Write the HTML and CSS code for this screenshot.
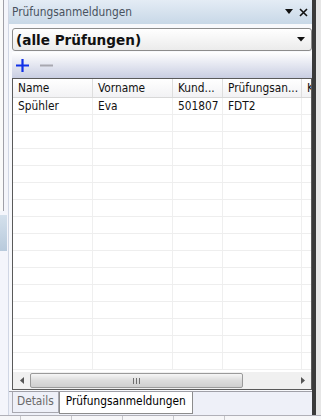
FILE: index.html
```html
<!DOCTYPE html>
<html lang="de">

<head>
  <meta charset="utf-8">
  <title>Prüfungsanmeldungen</title>
  <link rel="stylesheet" href="styles.css">
</head>

<body>
  <div id="screen">
    <div id="leftstrip">
      <div class="leftline"></div>
      <div class="leftblock"></div>
    </div>
    <div id="dock">
      <div id="titlebar">
        <span class="title">Prüfungsanmeldungen</span>
        <span class="titlebtns">
          <svg width="8" height="6" viewBox="0 0 8 6"><path d="M0 0H8L4 5Z" fill="#111"/></svg>
          <svg width="9" height="9" viewBox="0 0 9 9"><path d="M1 1L8 8M8 1L1 8" stroke="#111" stroke-width="1.6"/></svg>
        </span>
      </div>
      <div id="body">
        <div class="combo">
          <span>(alle Prüfungen)</span>
          <svg width="8" height="5" viewBox="0 0 8 5"><path d="M0 0H8L4 4.5Z" fill="#111"/></svg>
        </div>
        <div class="toolbar">
          <svg class="tbicon" width="13" height="13" viewBox="0 0 13 13"><path d="M6.5 0V13M0 6.5H13" stroke="#1030e8" stroke-width="2.2"/></svg>
          <svg class="tbicon" width="13" height="13" viewBox="0 0 13 13"><path d="M0 6.5H13" stroke="#a8a8b0" stroke-width="2"/></svg>
        </div>
        <div class="grid">
          <div class="rows">
            <div class="row head">
              <div class="c c1">Name</div>
              <div class="c c2">Vorname</div>
              <div class="c c3">Kund...</div>
              <div class="c c4">Prüfungsan...</div>
              <div class="c c5">K</div>
            </div>
            <div class="row">
              <div class="c c1">Spühler</div>
              <div class="c c2">Eva</div>
              <div class="c c3">501807</div>
              <div class="c c4">FDT2</div>
              <div class="c c5"></div>
            </div>
            <div class="row"><div class="c c1"></div><div class="c c2"></div><div class="c c3"></div><div class="c c4"></div><div class="c c5"></div></div>
            <div class="row"><div class="c c1"></div><div class="c c2"></div><div class="c c3"></div><div class="c c4"></div><div class="c c5"></div></div>
            <div class="row"><div class="c c1"></div><div class="c c2"></div><div class="c c3"></div><div class="c c4"></div><div class="c c5"></div></div>
            <div class="row"><div class="c c1"></div><div class="c c2"></div><div class="c c3"></div><div class="c c4"></div><div class="c c5"></div></div>
            <div class="row"><div class="c c1"></div><div class="c c2"></div><div class="c c3"></div><div class="c c4"></div><div class="c c5"></div></div>
            <div class="row"><div class="c c1"></div><div class="c c2"></div><div class="c c3"></div><div class="c c4"></div><div class="c c5"></div></div>
            <div class="row"><div class="c c1"></div><div class="c c2"></div><div class="c c3"></div><div class="c c4"></div><div class="c c5"></div></div>
            <div class="row"><div class="c c1"></div><div class="c c2"></div><div class="c c3"></div><div class="c c4"></div><div class="c c5"></div></div>
            <div class="row"><div class="c c1"></div><div class="c c2"></div><div class="c c3"></div><div class="c c4"></div><div class="c c5"></div></div>
            <div class="row"><div class="c c1"></div><div class="c c2"></div><div class="c c3"></div><div class="c c4"></div><div class="c c5"></div></div>
            <div class="row"><div class="c c1"></div><div class="c c2"></div><div class="c c3"></div><div class="c c4"></div><div class="c c5"></div></div>
            <div class="row"><div class="c c1"></div><div class="c c2"></div><div class="c c3"></div><div class="c c4"></div><div class="c c5"></div></div>
            <div class="row"><div class="c c1"></div><div class="c c2"></div><div class="c c3"></div><div class="c c4"></div><div class="c c5"></div></div>
            <div class="row"><div class="c c1"></div><div class="c c2"></div><div class="c c3"></div><div class="c c4"></div><div class="c c5"></div></div>
            <div class="row"><div class="c c1"></div><div class="c c2"></div><div class="c c3"></div><div class="c c4"></div><div class="c c5"></div></div>
          </div>
          <div class="hscroll">
            <div class="arrow">
              <svg width="4" height="7" viewBox="0 0 4 7"><path d="M4 0V7L0 3.5Z" fill="#555"/></svg>
            </div>
            <div class="track">
              <div class="thumb"><span class="grip"></span></div>
            </div>
            <div class="arrow">
              <svg width="4" height="7" viewBox="0 0 4 7"><path d="M0 0V7L4 3.5Z" fill="#555"/></svg>
            </div>
          </div>
        </div>
      </div>
      <div id="tabs">
        <div class="tab">Details</div>
        <div class="tab active">Prüfungsanmeldungen</div>
      </div>
    </div>
    <div id="rightbar"></div>
  </div>
  <div id="bottomstrip">
    <span></span><span></span><span></span><span></span><span></span>
  </div>
</body>

</html>
```

FILE: styles.css
```css
body {
  margin: 0;
  width: 321px;
  height: 420px;
  overflow: hidden;
  background-color: #eef0f8;
  font-family: "DejaVu Sans Condensed", "DejaVu Sans", sans-serif;
  font-size: 11.8px;
  color: #111;
}

#screen {
  display: flex;
  height: 415px;
}

#leftstrip {
  width: 8px;
  display: flex;
  flex-direction: column;
  background-color: #f4f5fb;
}

.leftline {
  width: 3px;
  height: 211px;
  border-right: 1px solid #a0a0a8;
  background-color: #fafafa;
}

.leftblock {
  margin-top: 4px;
  width: 7px;
  height: 36px;
  background: linear-gradient(#d4e0ec, #b8cadc);
}

#dock {
  width: 303px;
  display: flex;
  flex-direction: column;
  border-left: 1px solid #d0d6e4;
}

#titlebar {
  height: 24px;
  display: flex;
  align-items: center;
  justify-content: space-between;
  padding: 0 4px 0 3px;
  background: linear-gradient(#e4ecf5, #c8d8e7);
  color: #48525e;
}

.titlebtns {
  display: flex;
  align-items: center;
  gap: 6px;
}

#body {
  flex: 1;
  display: flex;
  flex-direction: column;
  padding: 4px 0 1px 3px;
  background-color: #f8f9fc;
}

.combo {
  height: 21px;
  display: flex;
  align-items: center;
  justify-content: space-between;
  padding: 0 6px 0 3px;
  border: 1px solid #8c8c8c;
  border-radius: 3px;
  background: linear-gradient(#ffffff, #ebebeb);
  font-family: "DejaVu Sans", sans-serif;
  font-weight: bold;
  font-size: 13.6px;
}

.toolbar {
  height: 26px;
  margin-top: 1px;
  display: flex;
  align-items: center;
  gap: 11px;
  padding-left: 4px;
  background: linear-gradient(#ffffff, #c9cee2);
}

.grid {
  flex: 1;
  display: flex;
  flex-direction: column;
  border: 1px solid #5a5a5a;
  background-color: #fff;
  overflow: hidden;
}

.rows {
  flex: 1;
  overflow: hidden;
}

.row {
  display: flex;
  height: 17px;
  border-bottom: 1px solid #eeeeee;
  box-sizing: border-box;
}

.row.head {
  height: 19px;
  border-bottom: 1px solid #d8d8d8;
  background: linear-gradient(#ffffff, #f2f2f4);
}

.c {
  flex: none;
  box-sizing: border-box;
  padding-left: 5px;
  line-height: 16px;
  border-right: 1px solid #efefef;
  white-space: nowrap;
  overflow: hidden;
}

.head .c {
  line-height: 18px;
  border-right-color: #dedede;
}

.c1 { width: 80px; }
.c2 { width: 80px; }
.c3 { width: 50px; }
.c4 { width: 79px; }
.c5 { width: 20px; padding-left: 5px; border-right: none; }

.hscroll {
  height: 17px;
  display: flex;
  background-color: #f0f0f0;
}

.arrow {
  width: 17px;
  display: flex;
  align-items: center;
  justify-content: center;
}

.track {
  flex: 1;
  padding: 1px 0;
  display: flex;
}

.thumb {
  width: 211px;
  display: flex;
  align-items: center;
  justify-content: center;
  border: 1px solid #9a9a9a;
  border-radius: 2px;
  background: linear-gradient(#f6f6f6, #dcdcdc 50%, #cfcfcf);
}

.grip {
  width: 7px;
  height: 6px;
  background: repeating-linear-gradient(90deg, #6e6e6e 0 1px, transparent 1px 3px);
}

#tabs {
  height: 23px;
  display: flex;
  align-items: flex-start;
  padding-left: 3px;
  border-top: 1px solid #a0a0a8;
  background-color: #eef0f8;
}

.tab {
  height: 20px;
  line-height: 19px;
  padding: 0 4px;
  border: 1px solid #a8a8b0;
  border-top: none;
  color: #6a6a6a;
  background-color: #eef0f8;
}

.tab.active {
  height: 21px;
  background-color: #fff;
  color: #000;
  border-color: #8c8c8c;
  padding: 0 6px;
}

#rightbar {
  flex: 1;
  border-left: 4px solid #3a3a3a;
  background-color: #e6e6e6;
}

#bottomstrip {
  height: 5px;
  display: flex;
  gap: 50px;
  padding-left: 20px;
  border-top: 1px solid #b0b0b8;
  background-color: #f6f6f8;
}

#bottomstrip span {
  width: 1px;
  background-color: #c8c8cc;
}
```
